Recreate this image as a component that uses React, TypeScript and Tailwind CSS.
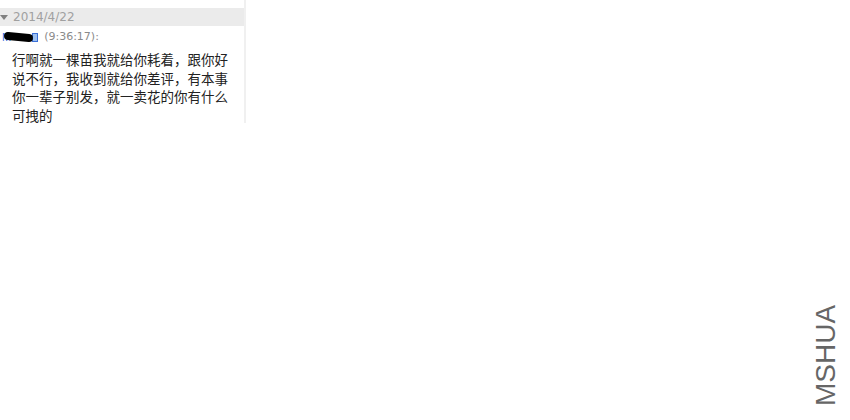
import React from 'react';

interface ChatMessage {
  time: string;
  lines: string[];
}

const message: ChatMessage = {
  time: '(9:36:17):',
  lines: [
    '行啊就一棵苗我就给你耗着，跟你好',
    '说不行，我收到就给你差评，有本事',
    '你一辈子别发，就一卖花的你有什么',
    '可拽的',
  ],
};

const App: React.FC = () => {
  return (
    <div className="relative w-[850px] h-[420px] bg-white overflow-hidden" style={{ fontFamily: '"Liberation Sans", "Noto Sans CJK SC", sans-serif' }}>
      {/* chat history panel */}
      <div className="w-[246px] h-[123px] border-r-2 border-[#f0f0f0] pt-[8px]">
        <div className="h-[18px] bg-[#ebebeb] flex items-center">
          {/* collapse arrow */}
          <span className="ml-[0px] mr-[5px] w-0 h-0 border-l-[4px] border-r-[4px] border-t-[5px] border-l-transparent border-r-transparent border-t-[#808080]"></span>
          <span className="text-[12px] text-[#a0a0a0] leading-none" style={{ fontFamily: 'Tahoma, "DejaVu Sans", sans-serif' }}>2014/4/22</span>
        </div>

        <div className="flex items-center h-[23px] pl-[2px]">
          {/* sender name, scribbled out */}
          <span className="relative flex items-center">
            <span className="text-[11px] leading-none text-[#3a6fd8]">M</span>
            <span className="w-[21px]"></span>
            <span className="w-[6px] h-[9px] border border-[#3a6fd8] bg-[#9cc0f0]"></span>
            <span className="absolute left-[2px] top-[1px] w-[29px] h-[8px] rounded-full bg-black rotate-[6deg]"></span>
          </span>
          <span className="ml-[6px] text-[11px] text-[#8a8a8a]" style={{ fontFamily: 'Tahoma, "DejaVu Sans", sans-serif' }}>{message.time}</span>
        </div>

        <div className="pl-[12px] pt-[1px] text-[13.5px] leading-[18.5px] text-[#222]" style={{ fontFamily: '"Noto Sans CJK SC", sans-serif' }}>
          {message.lines.map((line) => (
            <div key={line}>{line}</div>
          ))}
        </div>
      </div>

      {/* watermark */}
      <div className="absolute left-[812px] top-[406px] origin-top-left -rotate-90 text-[28px] leading-none text-[#666]" style={{ fontFamily: '"Liberation Sans", sans-serif' }}>
        MSHUA
      </div>
    </div>
  );
};

export default App;
